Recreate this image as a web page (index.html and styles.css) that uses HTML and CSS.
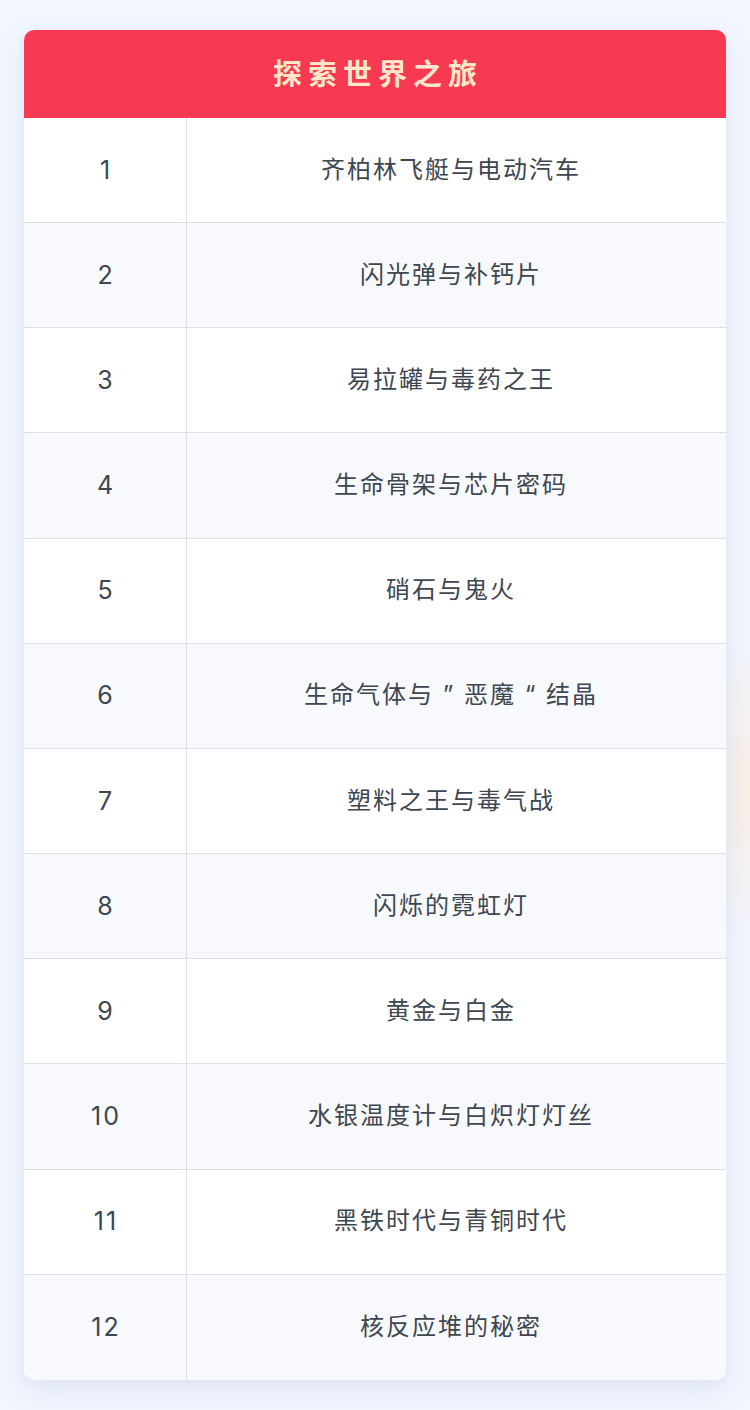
FILE: index.html
```html
<!DOCTYPE html>
<html lang="zh">
<head>
<meta charset="utf-8">
<title>探索世界之旅</title>
<link rel="stylesheet" href="styles.css">
</head>
<body>
<div class="page">
  <div class="card">
    <div class="card-header"><h1 class="title">探索世界之旅</h1></div>
    <div class="rows">
      <div class="row"><div class="num">1</div><div class="name">齐柏林飞艇与电动汽车</div></div>
      <div class="row"><div class="num">2</div><div class="name">闪光弹与补钙片</div></div>
      <div class="row"><div class="num">3</div><div class="name">易拉罐与毒药之王</div></div>
      <div class="row"><div class="num">4</div><div class="name">生命骨架与芯片密码</div></div>
      <div class="row"><div class="num">5</div><div class="name">硝石与鬼火</div></div>
      <div class="row"><div class="num">6</div><div class="name">生命气体与 ” 恶魔 “ 结晶</div></div>
      <div class="row"><div class="num">7</div><div class="name">塑料之王与毒气战</div></div>
      <div class="row"><div class="num">8</div><div class="name">闪烁的霓虹灯</div></div>
      <div class="row"><div class="num">9</div><div class="name">黄金与白金</div></div>
      <div class="row"><div class="num">10</div><div class="name">水银温度计与白炽灯灯丝</div></div>
      <div class="row"><div class="num">11</div><div class="name">黑铁时代与青铜时代</div></div>
      <div class="row"><div class="num">12</div><div class="name">核反应堆的秘密</div></div>
    </div>
  </div>
</div>
</body>
</html>
```
FILE: styles.css
```css
* { box-sizing: border-box; }

html, body {
  margin: 0;
  padding: 0;
}

body {
  width: 750px;
  height: 1410px;
  font-family: "Inter", "Noto Sans CJK SC", sans-serif;
  background:
    radial-gradient(ellipse 50px 160px at 750px 790px, rgba(255, 232, 210, 0.55), rgba(255, 232, 210, 0) 100%),
    #f2f6fe;
  overflow: hidden;
}

.page {
  padding: 30px 24px;
}

.card {
  width: 702px;
  background: #ffffff;
  border-radius: 10px;
  overflow: hidden;
  box-shadow: 0 12px 30px rgba(120, 140, 210, 0.14), 0 2px 8px rgba(120, 140, 210, 0.06);
}

.card-header {
  height: 88px;
  padding-bottom: 4px;
  background: #f73952;
  display: flex;
  align-items: center;
  justify-content: center;
}

.title {
  margin: 0;
  padding-left: 6px;
  font-family: "Noto Sans CJK SC", sans-serif;
  font-size: 29px;
  font-weight: 700;
  letter-spacing: 6px;
  color: #ffe8c8;
  line-height: 1;
}

.rows {
  height: 1262px;
  display: grid;
  grid-template-rows: repeat(12, 1fr);
}

.row {
  display: grid;
  grid-template-columns: 163px 1fr;
  border-bottom: 1px solid #dcdfe6;
  background: #ffffff;
  color: #3e4650;
}

.row:nth-child(even) {
  background: #f7f9fd;
}

.row:last-child {
  border-bottom: none;
}

.num {
  display: flex;
  align-items: center;
  justify-content: center;
  padding-bottom: 1px;
  padding-left: 2px;
  border-right: 1px solid #dcdfe6;
  font-size: 25px;
  font-weight: 400;
  letter-spacing: 2px;
}

.name {
  display: flex;
  align-items: center;
  justify-content: center;
  padding-right: 11px;
  padding-bottom: 6px;
  font-size: 24px;
  letter-spacing: 2px;
}
```
